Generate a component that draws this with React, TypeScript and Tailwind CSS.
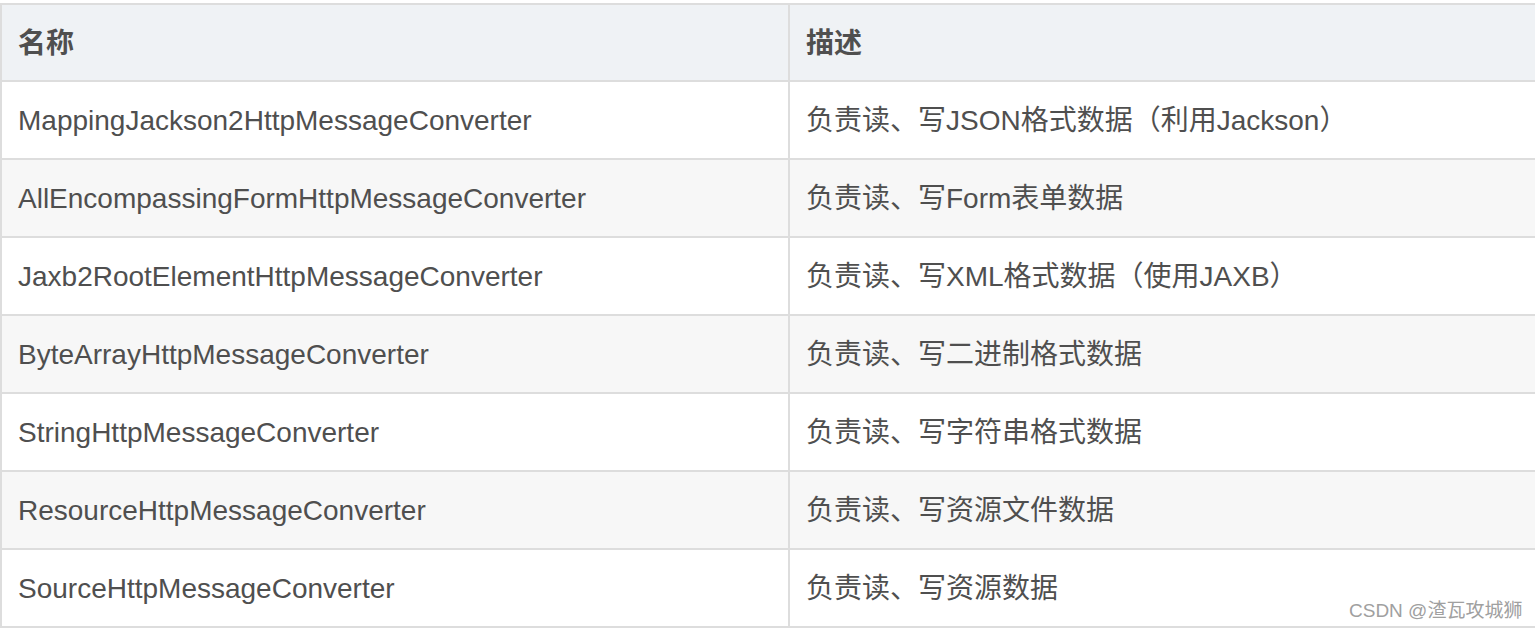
import React from "react";

const rows: [string, string][] = [
  ["MappingJackson2HttpMessageConverter", "负责读、写JSON格式数据（利用Jackson）"],
  ["AllEncompassingFormHttpMessageConverter", "负责读、写Form表单数据"],
  ["Jaxb2RootElementHttpMessageConverter", "负责读、写XML格式数据（使用JAXB）"],
  ["ByteArrayHttpMessageConverter", "负责读、写二进制格式数据"],
  ["StringHttpMessageConverter", "负责读、写字符串格式数据"],
  ["ResourceHttpMessageConverter", "负责读、写资源文件数据"],
  ["SourceHttpMessageConverter", "负责读、写资源数据"],
];

const font = {
  fontFamily: '"Liberation Sans", Arial, "Noto Sans CJK SC", sans-serif',
};

export default function App() {
  return (
    <div className="w-[1535px] h-[630px] overflow-hidden bg-white pt-[3px]" style={font}>
      <div className="relative w-[1560px] border-t-2 border-l-2 border-[#dddddd] text-[28px] text-[#4f4f4f]">
        <div className="flex h-[77px] border-b-2 border-[#dddddd] bg-[#eff2f5] font-bold">
          <div className="w-[788px] border-r-2 border-[#dddddd] flex items-center pl-[16px] pt-[2px]">名称</div>
          <div className="flex-1 flex items-center pl-[16px] pt-[2px]">描述</div>
        </div>
        {rows.map(([a, b], i) => (
          <div
            key={a}
            className={`flex h-[78px] border-b-2 border-[#dddddd] ${i % 2 === 1 ? "bg-[#f7f7f7]" : "bg-white"}`}
          >
            <div className="w-[788px] border-r-2 border-[#dddddd] flex items-center pl-[16px] pt-[2px]">{a}</div>
            <div className="flex-1 flex items-center pl-[16px] pt-[2px]">{b}</div>
          </div>
        ))}
        <div
          className="absolute left-[1347px] bottom-[8px] text-[19px] text-[#a0a0a0] leading-none"
          style={{ textShadow: "0 0 2px #ffffff" }}
        >
          CSDN @渣瓦攻城狮
        </div>
      </div>
    </div>
  );
}
